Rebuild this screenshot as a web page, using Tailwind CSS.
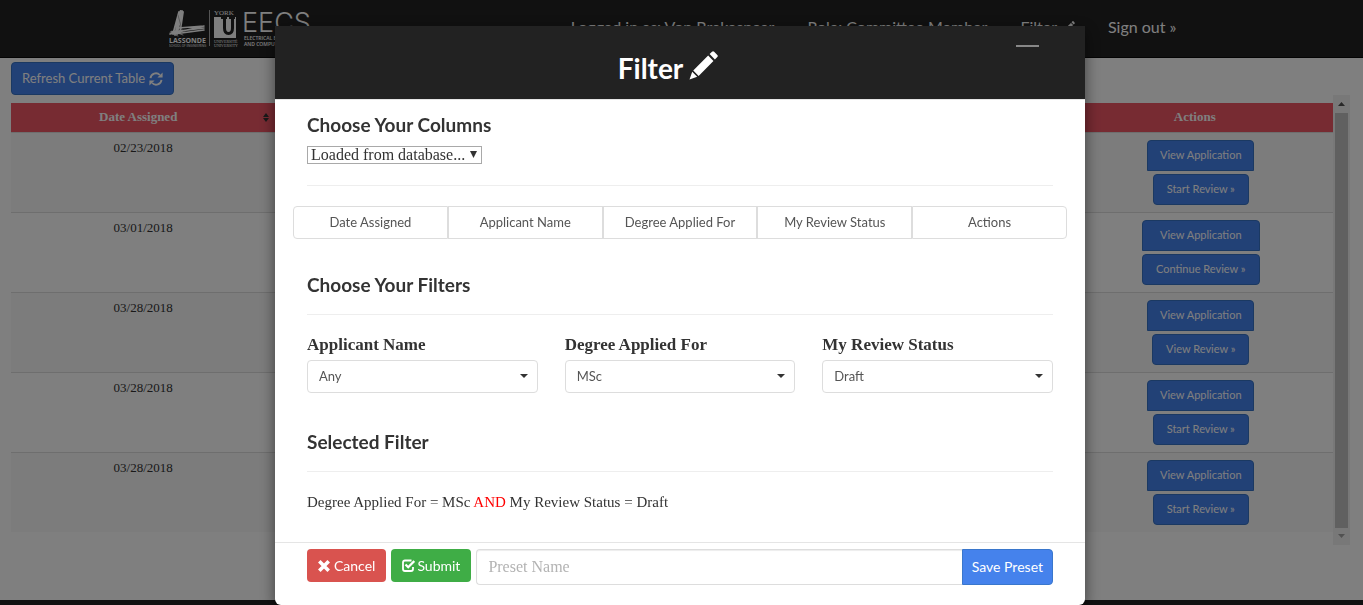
<!DOCTYPE html>
<html lang="en">
<head>
<meta charset="utf-8">
<meta name="viewport" content="width=device-width, initial-scale=1">
<title>Committee reviews</title>
<script src="https://cdn.jsdelivr.net/npm/@tailwindcss/browser@4"></script>
</head>
<body class="overflow-hidden bg-white font-['Liberation_Serif',serif] text-sm text-[#333]">
<svg class="hidden" aria-hidden="true">
  <symbol id="pencil" viewBox="0 0 28 28"><path fill="currentColor" d="M22.200.700a1.500 1.500 0 0 1 2.100 0l3 3.100a1.500 1.500 0 0 1 0 2.100L25 8.200 19.900 3zM18.500 4.400l5.100 5.200L9.300 24.100 4.100 18.900zM3.100 20.100l4.800 4.800L.500 27.500z"/></symbol>
  <symbol id="refresh" viewBox="0 0 14 14"><path fill="none" stroke="currentColor" stroke-width="1.800" d="M1.500 6.200A5.400 5.400 0 0 1 10.800 3M12.500 7.800A5.400 5.400 0 0 1 3.200 11"/><path fill="currentColor" d="M13.600.400v5.200H8.400zM.400 13.600V8.400h5.200z"/></symbol>
</svg>

<div class="flex min-h-screen flex-col">
  <header class="border-b border-[#090909] bg-[#222]">
    <div class="mx-auto flex h-[57px] max-w-[1170px] items-center justify-between pr-[90px] pl-[72px]">
      <a href="#" aria-label="Lassonde, York University, EECS" class="block">
        <svg width="150" height="38" viewBox="0 0 150 38" class="block text-white">
          <g fill="none" stroke="#fff" stroke-linecap="round">
            <path stroke-width="1.800" d="M10 2L4 24M11.500 1L6 25M13 1L8 24M14 2L11 22"/>
            <path stroke-width="1" stroke="#bbb" d="M9 5L13 20M3 21l11 4M1 23l8 3"/>
            <path stroke-width="1.600" d="M1 24L35 16M2 22l33-4M5 24l30-4M9 18l26-2"/>
          </g>
          <text x="0" y="33" font-family="Open Sans, sans-serif" font-size="7" font-weight="700" fill="#fff">LASSONDE</text>
          <text x="0" y="37" font-family="Open Sans, sans-serif" font-size="3" fill="#fff">SCHOOL OF ENGINEERING</text>
          <path d="M40.500 0v36" stroke="#aaa"/>
          <text x="45" y="5" font-family="Liberation Serif, serif" font-size="7" fill="#fff">YORK</text>
          <path fill="#fff" d="M45 7h22v21H45z"/>
          <path fill="#222" d="M52 7h6v2h-1v9q0 4 2.500 4t2.500-4V9h-2V7h6v2h-1v9q0 7-5.500 7t-5.500-7V9h-2z"/>
          <text x="45" y="33" font-family="Liberation Serif, serif" font-size="4" fill="#fff">UNIVERSITÉ</text>
          <text x="45" y="37" font-family="Liberation Serif, serif" font-size="4" fill="#fff">UNIVERSITY</text>
          <text x="73" y="22" font-family="Inter, sans-serif" font-size="27" font-weight="300" fill="#fff">EECS</text>
          <text x="75" y="30" font-family="Open Sans, sans-serif" font-size="5" font-weight="600" fill="#fff">ELECTRICAL ENGINEERING</text>
          <text x="75" y="36" font-family="Open Sans, sans-serif" font-size="5" font-weight="600" fill="#fff">AND COMPUTER SCIENCE</text>
        </svg>
      </a>
      <nav class="flex gap-[33px] pb-1 font-['Lato',sans-serif] text-base leading-5 text-white">
        <a href="#">Logged in as: Von Brakespear</a>
        <a href="#">Role: Committee Member</a>
        <a href="#" class="flex items-center gap-1.5">Filter <svg class="size-3"><use href="#pencil"/></svg></a>
        <a href="#">Sign out »</a>
      </nav>
    </div>
  </header>

  <main class="flex-1 pt-1 pr-[13px] pl-[11px]">
    <button type="button" class="flex h-[33px] items-center gap-1 rounded border border-[#3672c4] bg-[#4582ec] px-2.5 font-['Lato',sans-serif] text-[13px] text-white">Refresh Current Table <svg class="size-3.5"><use href="#refresh"/></svg></button>
    <div class="flex h-[450px]">
      <table class="mt-2 h-[429px] w-full table-fixed border-collapse text-center text-[13px]">
        <thead>
          <tr class="h-[29px] bg-[#ee5665] text-white">
            <th scope="col" class="relative pr-2.5">Date Assigned
              <svg class="absolute top-2.5 right-1.5 h-[9px] w-1.5" viewBox="0 0 6 9"><path fill="#333" d="M3 0l3 4H0zM3 9L0 5h6z"/></svg></th>
            <th scope="col">Applicant Name</th><th scope="col">Degree Applied For</th><th scope="col">My Review Status</th>
            <th scope="col" class="pr-3">Actions</th>
          </tr>
        </thead>
        <tbody id="rows"></tbody>
      </table>
      <div class="flex w-[17px] shrink-0 flex-col items-center bg-[#f1f1f1]" aria-hidden="true">
        <svg width="17" height="18" viewBox="0 0 17 18"><path fill="#505050" d="M5 11l3.500-4 3.500 4z"/></svg>
        <div class="w-[13px] flex-1 bg-[#c1c1c1]"></div>
        <svg width="17" height="17" viewBox="0 0 17 17"><path fill="#a3a3a3" d="M5 6h7l-3.500 4z"/></svg>
      </div>
    </div>
  </main>
  <footer class="h-[5px] bg-[#222]"></footer>
</div>

<template id="row">
  <tr class="h-20 border-t border-[#ddd] odd:bg-[#f9f9f9]">
    <td class="pt-1.5 align-top leading-[18px]"></td><td></td><td></td><td></td>
    <td class="pt-[7px] align-top font-['Lato',sans-serif] text-[11px] text-white">
      <div class="inline-flex flex-col items-center gap-[3px]">
        <button type="button" class="h-[31px] min-w-[107px] self-stretch rounded-t border border-[#3672c4] bg-[#4582ec] px-2.5">View Application</button>
        <button type="button" class="h-[31px] rounded border border-[#3672c4] bg-[#4582ec] px-[13px]"></button>
      </div>
    </td>
  </tr>
</template>

<div class="fixed inset-0 bg-black/50"></div>
<div class="fixed inset-0 overflow-hidden pt-[26px] pr-[3px]">
  <div role="dialog" aria-modal="true" aria-labelledby="title" class="mx-auto max-w-[810px] rounded-b-md bg-white shadow-[0_5px_15px_rgba(0,0,0,0.5)]">
    <div class="relative flex h-[74px] items-center justify-center border-b border-[#e5e5e5] bg-[#222] pt-2.5 pr-6 text-white">
      <h1 id="title" class="flex items-center gap-1.5 font-['Lato',sans-serif] text-[28px] leading-8 font-bold">Filter <svg class="mb-1 size-[29px]"><use href="#pencil"/></svg></h1>
      <button type="button" aria-label="Minimize" class="absolute top-[18px] right-[46px] flex h-1 w-[23px] items-center"><span class="h-0.5 w-full bg-[#888]"></span></button>
    </div>

    <div class="px-8 pt-[15px] pb-[30px]">
      <h2 class="font-['Lato',sans-serif] text-[19px] leading-5 font-bold"><label for="preset">Choose Your Columns</label></h2>
      <div class="relative mt-[11px] h-[18px] w-[175px]">
        <select id="preset" class="block h-full w-full appearance-none border border-[#a9a9a9] bg-white pl-[3px] text-base leading-4"><option>Loaded from database...</option></select>
        <svg class="pointer-events-none absolute top-[5px] right-[5px] h-[7px] w-[7px]" viewBox="0 0 7 7"><path fill="#333" d="M0 0h7L3.500 7z"/></svg>
      </div>
      <hr class="mt-[21px] border-[#eee]">
      <div class="-mx-3.5 mt-5 grid grid-cols-5 font-['Lato',sans-serif] text-[13px] text-[#555]">
        <button type="button" class="h-[33px] rounded-l border border-[#ddd]">Date Assigned</button>
        <button type="button" class="h-[33px] border border-[#ddd]">Applicant Name</button>
        <button type="button" class="h-[33px] border border-[#ddd]">Degree Applied For</button>
        <button type="button" class="h-[33px] border border-[#ddd]">My Review Status</button>
        <button type="button" class="h-[33px] rounded-r border border-[#ddd]">Actions</button>
      </div>

      <h2 class="mt-9 font-['Lato',sans-serif] text-[19px] leading-5 font-bold">Choose Your Filters</h2>
      <hr class="mt-[19px] border-[#eee]">
      <div class="mt-5 grid grid-cols-3 gap-[27px]">
        <div>
          <label for="name" class="block text-[17px] leading-5 font-bold">Applicant Name</label>
          <div class="relative mt-[5px]">
            <select id="name" class="block h-[33px] w-full appearance-none rounded border border-[#ddd] bg-white px-[11px] font-['Lato',sans-serif] text-[13px] text-[#555]"><option>Any</option></select>
            <svg class="pointer-events-none absolute top-3.5 right-2.5 h-1 w-2" viewBox="0 0 8 4"><path fill="#333" d="M0 0h8L4 4z"/></svg>
          </div>
        </div>
        <div>
          <label for="degree" class="block text-[17px] leading-5 font-bold">Degree Applied For</label>
          <div class="relative mt-[5px]">
            <select id="degree" class="block h-[33px] w-full appearance-none rounded border border-[#ddd] bg-white px-[11px] font-['Lato',sans-serif] text-[13px] text-[#555]"><option>MSc</option></select>
            <svg class="pointer-events-none absolute top-3.5 right-2.5 h-1 w-2" viewBox="0 0 8 4"><path fill="#333" d="M0 0h8L4 4z"/></svg>
          </div>
        </div>
        <div>
          <label for="status" class="block text-[17px] leading-5 font-bold">My Review Status</label>
          <div class="relative mt-[5px]">
            <select id="status" class="block h-[33px] w-full appearance-none rounded border border-[#ddd] bg-white px-[11px] font-['Lato',sans-serif] text-[13px] text-[#555]"><option>Draft</option></select>
            <svg class="pointer-events-none absolute top-3.5 right-2.5 h-1 w-2" viewBox="0 0 8 4"><path fill="#333" d="M0 0h8L4 4z"/></svg>
          </div>
        </div>
      </div>

      <h2 class="mt-[39px] font-['Lato',sans-serif] text-[19px] leading-5 font-bold">Selected Filter</h2>
      <hr class="mt-[19px] border-[#eee]">
      <p class="mt-5 text-[15px] leading-5">Degree Applied For = MSc <span class="text-[#f00]">AND</span> My Review Status = Draft</p>
    </div>

    <div class="flex items-start gap-[5px] border-t border-[#e5e5e5] px-8 pt-1.5 pb-5 font-['Lato',sans-serif] text-sm text-white">
      <button type="button" class="flex h-[33px] items-center gap-1 rounded bg-[#d9534f] px-[11px]"><svg class="size-3" viewBox="0 0 12 12"><path fill="none" stroke="currentColor" stroke-width="3.600" d="M1.300 1.300l9.400 9.400M10.700 1.300l-9.400 9.400"/></svg>Cancel</button>
      <button type="button" class="flex h-[33px] items-center gap-0.5 rounded bg-[#3fad46] px-[11px]"><svg class="size-[13px]" viewBox="0 0 13 13"><path fill="none" stroke="currentColor" stroke-width="1.800" d="M9.500 1.500H3Q1 1.500 1 3.500v6.500q0 2 2 2h6q2 0 2-2V8"/><path fill="none" stroke="currentColor" stroke-width="2.300" d="M3.500 5.500l2.700 2.700L12.300 2"/></svg>Submit</button>
      <div class="flex h-9 flex-1">
        <input type="text" aria-label="Preset Name" placeholder="Preset Name" class="min-w-0 flex-1 rounded-l border border-r-0 border-[#ddd] px-[11px] font-['Liberation_Serif',serif] text-base text-[#333] shadow-[inset_0_1px_1px_rgba(0,0,0,0.075)] placeholder:text-[#b3b3b3]">
        <button type="button" class="rounded-r border border-[#3a77cc] bg-[#4582ec] px-[9px]">Save Preset</button>
      </div>
    </div>
  </div>
</div>

<script>
const reviews = [
  ['02/23/2018', 'Start Review »'],
  ['03/01/2018', 'Continue Review »'],
  ['03/28/2018', 'View Review »'],
  ['03/28/2018', 'Start Review »'],
  ['03/28/2018', 'Start Review »'],
];
for (const [date, action] of reviews) {
  const row = document.getElementById('row').content.cloneNode(true);
  row.querySelector('td').textContent = date;
  row.querySelectorAll('button')[1].textContent = action;
  document.getElementById('rows').append(row);
}
</script>
</body>
</html>
